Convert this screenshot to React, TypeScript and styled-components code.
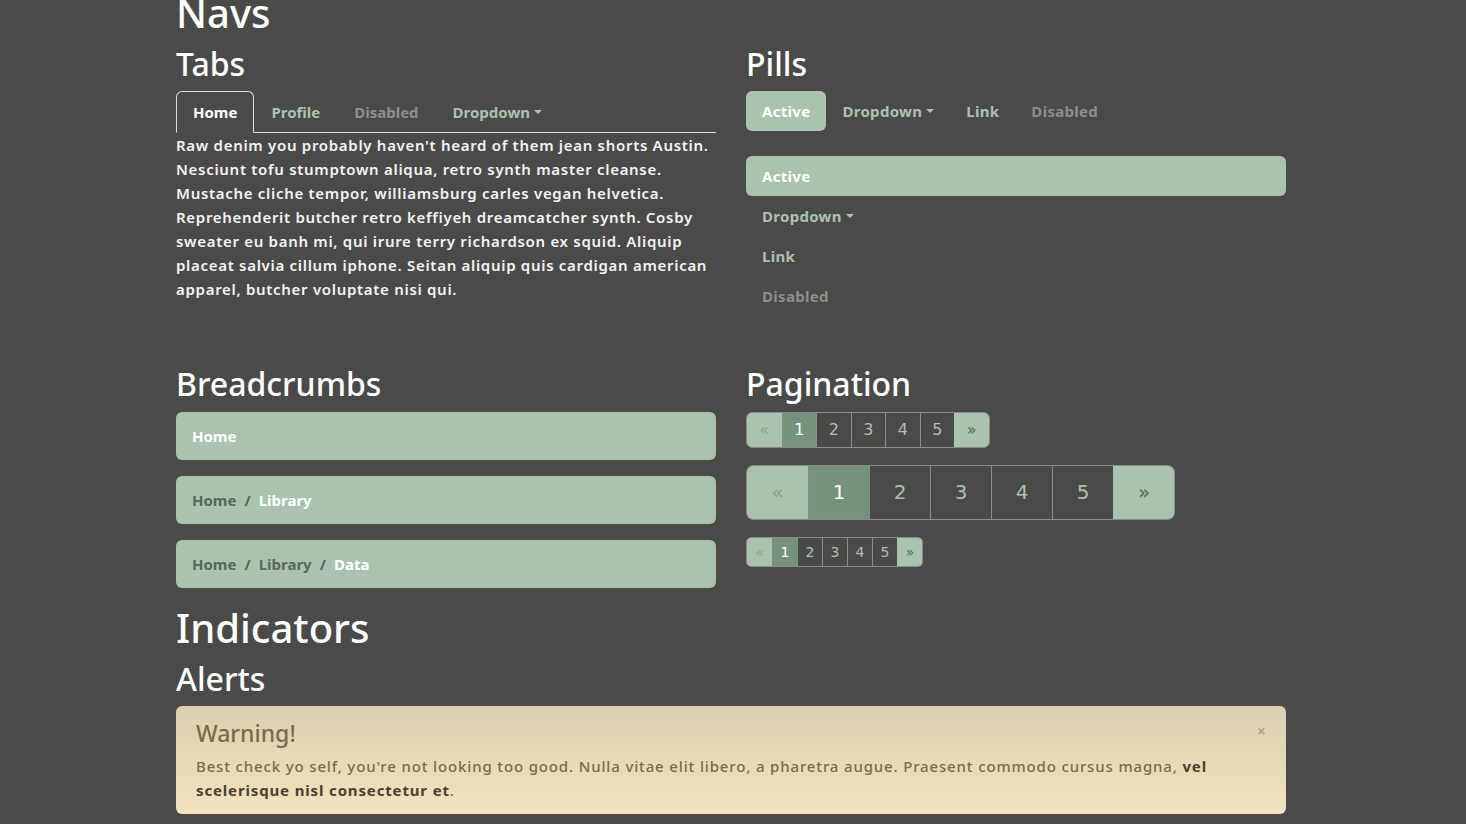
import React from 'react';
import styled, { createGlobalStyle } from 'styled-components';

const GlobalStyle = createGlobalStyle`
  html, body {
    margin: 0;
    padding: 0;
    background: #4a4a48;
  }
  body {
    font-family: "Noto Sans", "DejaVu Sans", sans-serif;
    color: #f2f2f2;
    font-size: 15px;
  }
`;

const Container = styled.div`
  width: 1110px;
  margin: -11px 0 0 176px;
`;

const H1 = styled.h1`
  font-size: 40px;
  font-weight: 500;
  line-height: 1.2;
  margin: 0 0 8px;
  color: #ffffff;
`;

const H2 = styled.h2`
  font-size: 32px;
  font-weight: 500;
  line-height: 1.2;
  margin: 0 0 8px;
  color: #ffffff;
`;

const Row = styled.div<{ $gap?: number }>`
  display: grid;
  grid-template-columns: 540px 540px;
  column-gap: 30px;
  margin-bottom: ${p => p.$gap ?? 0}px;
`;

const Col = styled.div``;

/* Tabs */
const TabBar = styled.div`
  display: flex;
  border-bottom: 1px solid #dcdcdc;
`;

const Tab = styled.a<{ $state?: 'active' | 'disabled' }>`
  display: flex;
  align-items: center;
  padding: 0 16px;
  height: 40px;
  font-weight: 700;
  font-size: 15px;
  text-decoration: none;
  border: 1px solid transparent;
  border-radius: 6px 6px 0 0;
  margin-bottom: -1px;
  color: ${p => (p.$state === 'active' ? '#ffffff' : p.$state === 'disabled' ? '#8e8e8c' : '#a9c3ae')};
  ${p =>
    p.$state === 'active' &&
    `
    border-color: #dcdcdc #dcdcdc #4a4a48;
    background: #4a4a48;
  `}
`;

const Caret = styled.span`
  display: inline-block;
  margin-left: 4px;
  border-top: 4px solid currentColor;
  border-left: 4px solid transparent;
  border-right: 4px solid transparent;
`;

const Paragraph = styled.p`
  margin: 0;
  font-weight: 600;
  line-height: 24px;
  letter-spacing: 0.7px;
  color: #f4f4f4;
`;

/* Pills */
const PillRow = styled.div<{ $vertical?: boolean }>`
  display: flex;
  flex-direction: ${p => (p.$vertical ? 'column' : 'row')};
  margin-top: ${p => (p.$vertical ? '25px' : '0')};
`;

const Pill = styled.a<{ $state?: 'active' | 'disabled' }>`
  display: flex;
  align-items: center;
  height: 40px;
  padding: 0 16px;
  border-radius: 6px;
  font-weight: 700;
  font-size: 15px;
  letter-spacing: 0.3px;
  text-decoration: none;
  background: ${p => (p.$state === 'active' ? '#a9c3af' : 'transparent')};
  color: ${p => (p.$state === 'active' ? '#ffffff' : p.$state === 'disabled' ? '#8e8e8c' : '#a9c3ae')};
`;

/* Breadcrumbs */
const Crumbs = styled.ol`
  display: flex;
  align-items: center;
  list-style: none;
  margin: 0 0 16px;
  height: 48px;
  padding: 0 16px;
  background: #a9c3af;
  border-radius: 6px;
  font-weight: 700;
`;

const Crumb = styled.li<{ $active?: boolean }>`
  color: ${p => (p.$active ? '#ffffff' : '#5b665e')};
`;

const Divider = styled.span`
  color: #5b665e;
  padding: 0 8px;
`;

/* Pagination */
type Size = 'sm' | 'md' | 'lg';
const sizes: Record<Size, { h: number; w: number; fs: number; r: number }> = {
  sm: { h: 30, w: 25, fs: 14, r: 5 },
  md: { h: 36, w: 34.5, fs: 16, r: 6 },
  lg: { h: 55, w: 61, fs: 20, r: 7 },
};

const Pager = styled.ul<{ $size: Size }>`
  display: inline-flex;
  list-style: none;
  margin: 0 0 17px;
  padding: 0;
  border: 1px solid #8b8b88;
  border-radius: ${p => sizes[p.$size].r}px;
  overflow: hidden;
  font-family: "DejaVu Sans", "Noto Sans", sans-serif;
  font-size: ${p => sizes[p.$size].fs}px;
`;

const PageItem = styled.li<{ $size: Size; $kind?: 'active' | 'end' | 'endDisabled' }>`
  display: flex;
  align-items: center;
  justify-content: center;
  height: ${p => sizes[p.$size].h - 2}px;
  min-width: ${p => sizes[p.$size].w}px;
  box-sizing: border-box;
  & + & {
    border-left: 1px solid #8b8b88;
  }
  background: ${p =>
    p.$kind === 'active' ? '#75937c' : p.$kind === 'end' || p.$kind === 'endDisabled' ? '#a9c3af' : '#4a4a48'};
  color: ${p =>
    p.$kind === 'active'
      ? '#ffffff'
      : p.$kind === 'endDisabled'
      ? '#86a38d'
      : p.$kind === 'end'
      ? '#5b665e'
      : '#a9c3ae'};
  ${p => (p.$kind === 'end' || p.$kind === 'endDisabled' ? 'border-left-color: transparent !important;' : '')}
`;

const PagerStack = styled.div`
  display: flex;
  flex-direction: column;
  align-items: flex-start;
`;

/* Alerts */
const Alert = styled.div`
  position: relative;
  padding: 14px 20px 12px;
  border-radius: 6px;
  background: linear-gradient(to bottom, #dccfae, #f3e3bf);
  color: #7b6a4a;
`;

const AlertTitle = styled.h4`
  margin: 0 0 6px;
  font-size: 23px;
  font-weight: 500;
  line-height: 1.2;
  color: #7b6a4a;
`;

const AlertText = styled.p`
  margin: 0;
  line-height: 24px;
  font-weight: 500;
  letter-spacing: 0.85px;
  strong {
    color: #4b4030;
    font-weight: 700;
  }
`;

const Close = styled.span`
  position: absolute;
  top: 14px;
  right: 20px;
  font-size: 16px;
  font-weight: 700;
  color: #b3a58a;
`;

const pages = ['1', '2', '3', '4', '5'];

const Pagination: React.FC<{ size: Size }> = ({ size }) => (
  <Pager $size={size}>
    <PageItem $size={size} $kind="endDisabled">«</PageItem>
    {pages.map(n => (
      <PageItem key={n} $size={size} $kind={n === '1' ? 'active' : undefined}>
        {n}
      </PageItem>
    ))}
    <PageItem $size={size} $kind="end">»</PageItem>
  </Pager>
);

export default function App() {
  return (
    <>
      <GlobalStyle />
      <Container>
        <H1>Navs</H1>
        <Row $gap={49}>
          <Col>
            <H2>Tabs</H2>
            <TabBar>
              <Tab $state="active">Home</Tab>
              <Tab>Profile</Tab>
              <Tab $state="disabled">Disabled</Tab>
              <Tab>
                Dropdown <Caret />
              </Tab>
            </TabBar>
            <Paragraph>
              Raw denim you probably haven't heard of them jean shorts Austin. Nesciunt tofu stumptown aliqua, retro
              synth master cleanse. Mustache cliche tempor, williamsburg carles vegan helvetica. Reprehenderit butcher
              retro keffiyeh dreamcatcher synth. Cosby sweater eu banh mi, qui irure terry richardson ex squid. Aliquip
              placeat salvia cillum iphone. Seitan aliquip quis cardigan american apparel, butcher voluptate nisi qui.
            </Paragraph>
          </Col>
          <Col>
            <H2>Pills</H2>
            <PillRow>
              <Pill $state="active">Active</Pill>
              <Pill>
                Dropdown <Caret />
              </Pill>
              <Pill>Link</Pill>
              <Pill $state="disabled">Disabled</Pill>
            </PillRow>
            <PillRow $vertical>
              <Pill $state="active">Active</Pill>
              <Pill>
                Dropdown <Caret />
              </Pill>
              <Pill>Link</Pill>
              <Pill $state="disabled">Disabled</Pill>
            </PillRow>
          </Col>
        </Row>
        <Row>
          <Col>
            <H2>Breadcrumbs</H2>
            <Crumbs>
              <Crumb $active>Home</Crumb>
            </Crumbs>
            <Crumbs>
              <Crumb>Home</Crumb>
              <Divider>/</Divider>
              <Crumb $active>Library</Crumb>
            </Crumbs>
            <Crumbs>
              <Crumb>Home</Crumb>
              <Divider>/</Divider>
              <Crumb>Library</Crumb>
              <Divider>/</Divider>
              <Crumb $active>Data</Crumb>
            </Crumbs>
          </Col>
          <Col>
            <H2>Pagination</H2>
            <PagerStack>
              <Pagination size="md" />
              <Pagination size="lg" />
              <Pagination size="sm" />
            </PagerStack>
          </Col>
        </Row>
        <H1>Indicators</H1>
        <H2>Alerts</H2>
        <Alert>
          <Close>×</Close>
          <AlertTitle>Warning!</AlertTitle>
          <AlertText>
            Best check yo self, you're not looking too good. Nulla vitae elit libero, a pharetra augue. Praesent
            commodo cursus magna, <strong>vel scelerisque nisl consectetur et</strong>.
          </AlertText>
        </Alert>
      </Container>
    </>
  );
}
